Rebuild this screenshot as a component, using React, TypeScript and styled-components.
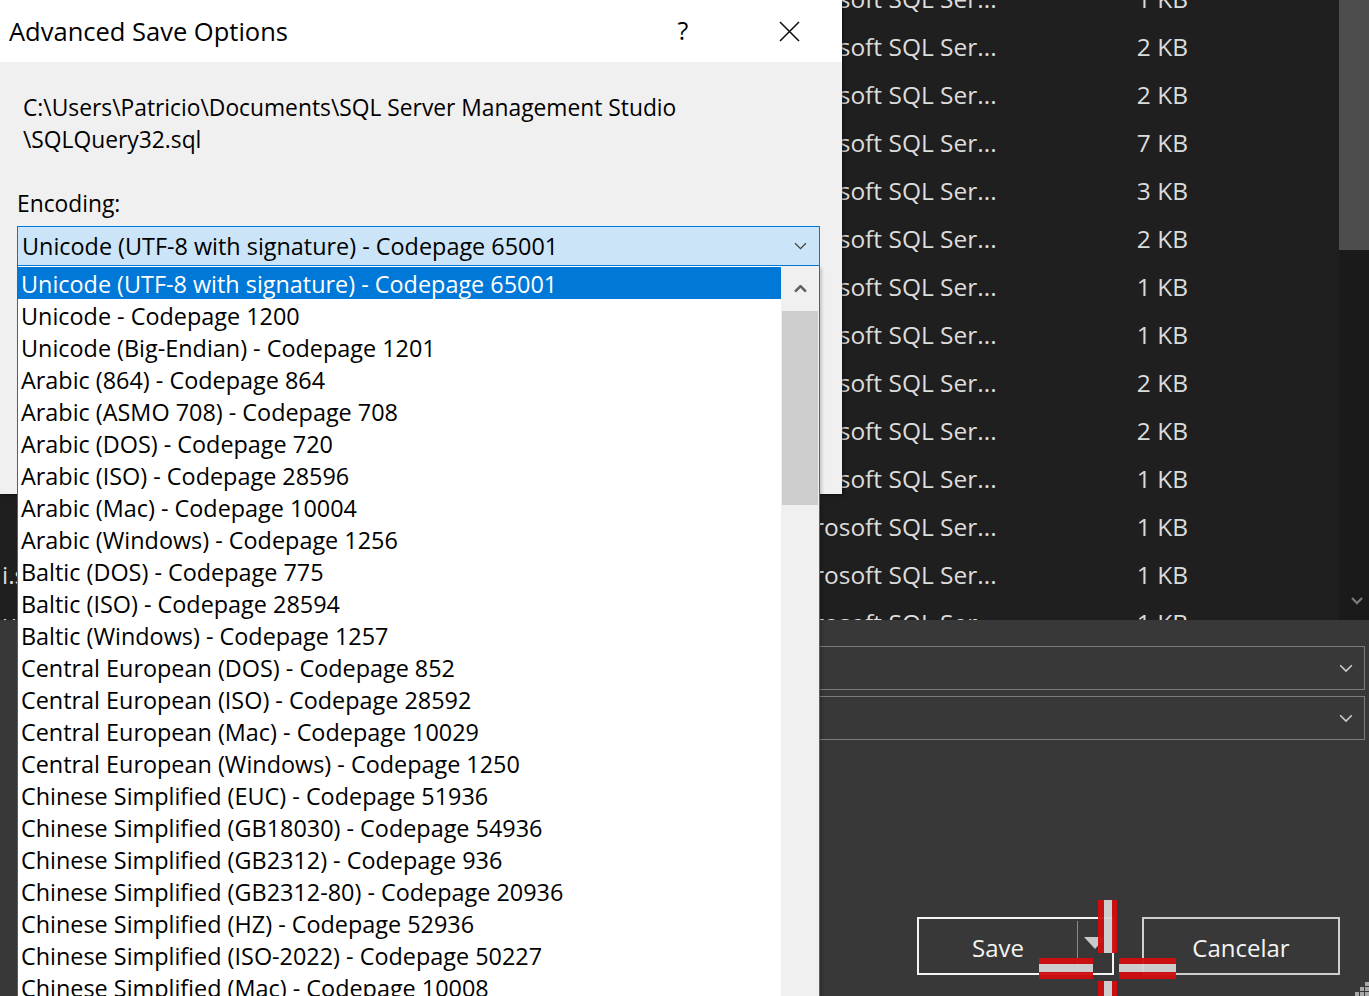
import React from 'react';
import styled, {createGlobalStyle} from 'styled-components';

const GlobalStyle = createGlobalStyle`
  html, body {
    margin: 0;
    padding: 0;
    background: #383838;
  }
  body {
    font-family: "Open Sans", "Noto Sans", sans-serif;
  }
`;

const encodings = [
  'Unicode (UTF-8 with signature) - Codepage 65001',
  'Unicode - Codepage 1200',
  'Unicode (Big-Endian) - Codepage 1201',
  'Arabic (864) - Codepage 864',
  'Arabic (ASMO 708) - Codepage 708',
  'Arabic (DOS) - Codepage 720',
  'Arabic (ISO) - Codepage 28596',
  'Arabic (Mac) - Codepage 10004',
  'Arabic (Windows) - Codepage 1256',
  'Baltic (DOS) - Codepage 775',
  'Baltic (ISO) - Codepage 28594',
  'Baltic (Windows) - Codepage 1257',
  'Central European (DOS) - Codepage 852',
  'Central European (ISO) - Codepage 28592',
  'Central European (Mac) - Codepage 10029',
  'Central European (Windows) - Codepage 1250',
  'Chinese Simplified (EUC) - Codepage 51936',
  'Chinese Simplified (GB18030) - Codepage 54936',
  'Chinese Simplified (GB2312) - Codepage 936',
  'Chinese Simplified (GB2312-80) - Codepage 20936',
  'Chinese Simplified (HZ) - Codepage 52936',
  'Chinese Simplified (ISO-2022) - Codepage 50227',
  'Chinese Simplified (Mac) - Codepage 10008',
];

// files behind the dialog, list is scrolled so first row is half hidden
const files = [
  {name: '', size: '1 KB'},
  {name: '', size: '2 KB'},
  {name: '', size: '2 KB'},
  {name: '', size: '7 KB'},
  {name: '', size: '3 KB'},
  {name: '', size: '2 KB'},
  {name: '', size: '1 KB'},
  {name: '', size: '1 KB'},
  {name: '', size: '2 KB'},
  {name: '', size: '2 KB'},
  {name: '', size: '1 KB'},
  {name: '', size: '1 KB'},
  {name: 'i.sql', size: '1 KB'},
  {name: 'uu.sql', size: '1 KB'},
];

const Screen = styled.div`
  position: relative;
  width: 1369px;
  height: 996px;
  overflow: hidden;
  display: grid;
  grid-template-rows: 620px 1fr;
  background: #383838;
`;

const FileArea = styled.div`
  display: grid;
  grid-template-columns: 1fr 30px;
  background: #1f1f1f;
  overflow: hidden;
`;

const FileRows = styled.div`
  overflow: hidden;
`;

const RowStack = styled.div`
  margin-top: -26px;
`;

const FileRow = styled.div`
  display: grid;
  grid-template-columns: 774px 304px 110px;
  height: 48px;
  align-items: center;
  color: #dcdcdc;
  font-size: 24.5px;
  white-space: nowrap;
`;

const NameCell = styled.div`
  padding-left: 2px;
`;

const SizeCell = styled.div`
  text-align: right;
`;

const VScroll = styled.div`
  display: flex;
  flex-direction: column;
  background: #1a1a1a;
`;

const VThumb = styled.div`
  height: 250px;
  background: #4d4d4d;
`;

const VArrow = styled.div`
  margin-top: auto;
  height: 38px;
  display: flex;
  align-items: center;
  justify-content: center;
  padding-left: 6px;
`;

const BottomPanel = styled.div`
  display: flex;
  flex-direction: column;
  gap: 6px;
  padding: 26px 4px 21px 300px;
  background: #383838;
`;

const DarkCombo = styled.div`
  height: 42px;
  border: 1px solid #7c7c7c;
  display: flex;
  align-items: center;
  justify-content: flex-end;
  padding-right: 11px;
`;

const ButtonRow = styled.div`
  margin-top: auto;
  display: flex;
  justify-content: flex-end;
  gap: 28px;
  padding-right: 25px;
`;

const DarkButton = styled.div<{$primary?: boolean}>`
  box-sizing: border-box;
  height: 58px;
  width: ${(p) => (p.$primary ? '197px' : '198px')};
  border: 2px solid ${(p) => (p.$primary ? '#f4f4f4' : '#cfcfcf')};
  color: #f4f4f4;
  font-size: 24px;
  display: flex;
  align-items: center;
  justify-content: center;
  padding-top: 2px;
`;

const SaveLabel = styled.div`
  flex: 1;
  text-align: center;
`;

const SplitPart = styled.div`
  align-self: stretch;
  width: 34px;
  border-left: 1px solid #8a8a8a;
  display: flex;
  align-items: center;
  justify-content: center;
  padding-bottom: 8px;
`;

const Dialog = styled.div`
  position: absolute;
  top: 0;
  left: 0;
  width: 842px;
  height: 494px;
  background: #f0f0f0;
  box-shadow: 1px 1px 4px rgba(0, 0, 0, 0.55);
  color: #000;
`;

const TitleBar = styled.div`
  height: 62px;
  background: #fff;
  display: flex;
  align-items: center;
  padding-left: 9px;
`;

const Title = styled.div`
  flex: 1;
  font-size: 25.5px;
`;

const HelpButton = styled.div`
  width: 40px;
  text-align: center;
  font-size: 25px;
  padding-bottom: 2px;
`;

const CloseButton = styled.div`
  width: 60px;
  margin: 0 23px 0 56px;
  display: flex;
  justify-content: center;
`;

const Body = styled.div`
  padding: 30px 0 0 17px;
  font-size: 22.8px;
`;

const PathText = styled.div`
  padding-left: 6px;
  line-height: 32px;
`;

const Label = styled.div`
  margin-top: 32px;
  line-height: 32px;
`;

const Combo = styled.div`
  box-sizing: border-box;
  margin-top: 6px;
  width: 803px;
  height: 40px;
  border: 1px solid #0078d7;
  background: #cce4f7;
  display: flex;
  align-items: center;
  padding: 0 12px 0 4px;
  font-size: 23.4px;
`;

const ComboText = styled.div`
  flex: 1;
`;

const DropList = styled.div`
  position: absolute;
  top: 266px;
  left: 17px;
  width: 803px;
  height: 760px;
  box-sizing: border-box;
  border: 1px solid #0078d7;
  border-top: none;
  background: #fff;
  display: grid;
  grid-template-columns: 1fr 38px;
  box-shadow: 2px 2px 3px rgba(0, 0, 0, 0.18);
  font-size: 23.4px;
`;

const Items = styled.div`
  padding-top: 1px;
`;

const Item = styled.div<{$selected?: boolean}>`
  box-sizing: border-box;
  height: 32px;
  line-height: 32px;
  padding: 2px 0 0 3px;
  white-space: nowrap;
  overflow: visible;
  background: ${(p) => (p.$selected ? '#0078d7' : 'transparent')};
  color: ${(p) => (p.$selected ? '#fff' : '#000')};
`;

const ItemText = styled.div`
  height: 30px;
  line-height: 30px;
`;

const ListScroll = styled.div`
  background: #f0f0f0;
  display: flex;
  flex-direction: column;
  padding-top: 1px;
`;

const ScrollUp = styled.div`
  height: 44px;
  display: flex;
  align-items: center;
  justify-content: center;
`;

const ScrollThumb = styled.div`
  height: 194px;
  margin: 0 1px;
  background: #cdcdcd;
`;

const Overlay = styled.svg`
  position: absolute;
  pointer-events: none;
`;

const Chevron = ({color, size = 12, width = 1.3, up = false}: {color: string; size?: number; width?: number; up?: boolean}) => (
  <svg width={size} height={size * 0.6} viewBox="0 0 12 7" fill="none">
    <path
      d={up ? 'M1 6 L6 1 L11 6' : 'M1 1 L6 6 L11 1'}
      stroke={color}
      strokeWidth={width}
      strokeLinejoin="miter"
    />
  </svg>
);

function MoveCursor() {
  // red/white docking cross over the Save button
  const red = '#d10d0d';
  const light = '#d6d6d6';
  return (
    <Overlay style={{left: 1039, top: 900}} width="137" height="96" viewBox="0 0 137 96">
      <g opacity="0.95">
        <rect x="59" y="0" width="19" height="53" fill={red} />
        <rect x="65" y="0" width="8" height="53" fill={light} />
        <rect x="59" y="81" width="19" height="15" fill={red} />
        <rect x="65" y="81" width="8" height="15" fill={light} />
        <rect x="0" y="58" width="54" height="21" fill={red} />
        <rect x="0" y="64" width="54" height="8" fill={light} />
        <rect x="80" y="58" width="57" height="21" fill={red} />
        <rect x="80" y="64" width="57" height="8" fill={light} />
      </g>
    </Overlay>
  );
}

function ResizeGrip() {
  const dots = [
    [10, 0],
    [5, 5],
    [10, 5],
    [0, 10],
    [5, 10],
    [10, 10],
  ];
  return (
    <Overlay style={{right: 0, bottom: 0}} width="14" height="14" viewBox="0 0 14 14">
      {dots.map(([x, y], i) => (
        <rect key={i} x={x} y={y} width="4" height="4" fill="#a8a8a8" />
      ))}
    </Overlay>
  );
}

export default function App() {
  return (
    <Screen>
      <GlobalStyle />
      <FileArea>
        <FileRows>
          <RowStack>
            {files.map((f, i) => (
              <FileRow key={i}>
                <NameCell>{f.name}</NameCell>
                <div>Microsoft SQL Ser...</div>
                <SizeCell>{f.size}</SizeCell>
              </FileRow>
            ))}
          </RowStack>
        </FileRows>
        <VScroll>
          <VThumb />
          <VArrow>
            <Chevron color="#7a7a7a" size={12} width={2.2} />
          </VArrow>
        </VScroll>
      </FileArea>

      <BottomPanel>
        <DarkCombo>
          <Chevron color="#cfcfcf" size={14} width={1.3} />
        </DarkCombo>
        <DarkCombo>
          <Chevron color="#cfcfcf" size={14} width={1.3} />
        </DarkCombo>
        <ButtonRow>
          <DarkButton $primary>
            <SaveLabel>Save</SaveLabel>
            <SplitPart>
              <svg width="22" height="12" viewBox="0 0 22 12">
                <path d="M0 0 L22 0 L11 12 Z" fill="#c9c9c9" />
              </svg>
            </SplitPart>
          </DarkButton>
          <DarkButton>Cancelar</DarkButton>
        </ButtonRow>
      </BottomPanel>

      <Dialog>
        <TitleBar>
          <Title>Advanced Save Options</Title>
          <HelpButton>?</HelpButton>
          <CloseButton>
            <svg width="21" height="21" viewBox="0 0 21 21">
              <path d="M1 1 L20 20 M20 1 L1 20" stroke="#111" strokeWidth="1.6" />
            </svg>
          </CloseButton>
        </TitleBar>
        <Body>
          <PathText>
            C:\Users\Patricio\Documents\SQL Server Management Studio
            <br />
            \SQLQuery32.sql
          </PathText>
          <Label>Encoding:</Label>
          <Combo>
            <ComboText>{encodings[0]}</ComboText>
            <Chevron color="#444" size={13} width={1.2} />
          </Combo>
        </Body>
        <DropList>
          <Items>
            {encodings.map((e, i) => (
              <Item key={e} $selected={i === 0}>
                <ItemText>{e}</ItemText>
              </Item>
            ))}
          </Items>
          <ListScroll>
            <ScrollUp>
              <Chevron color="#606060" size={13} width={2.4} up />
            </ScrollUp>
            <ScrollThumb />
          </ListScroll>
        </DropList>
      </Dialog>

      <MoveCursor />
      <ResizeGrip />
    </Screen>
  );
}
